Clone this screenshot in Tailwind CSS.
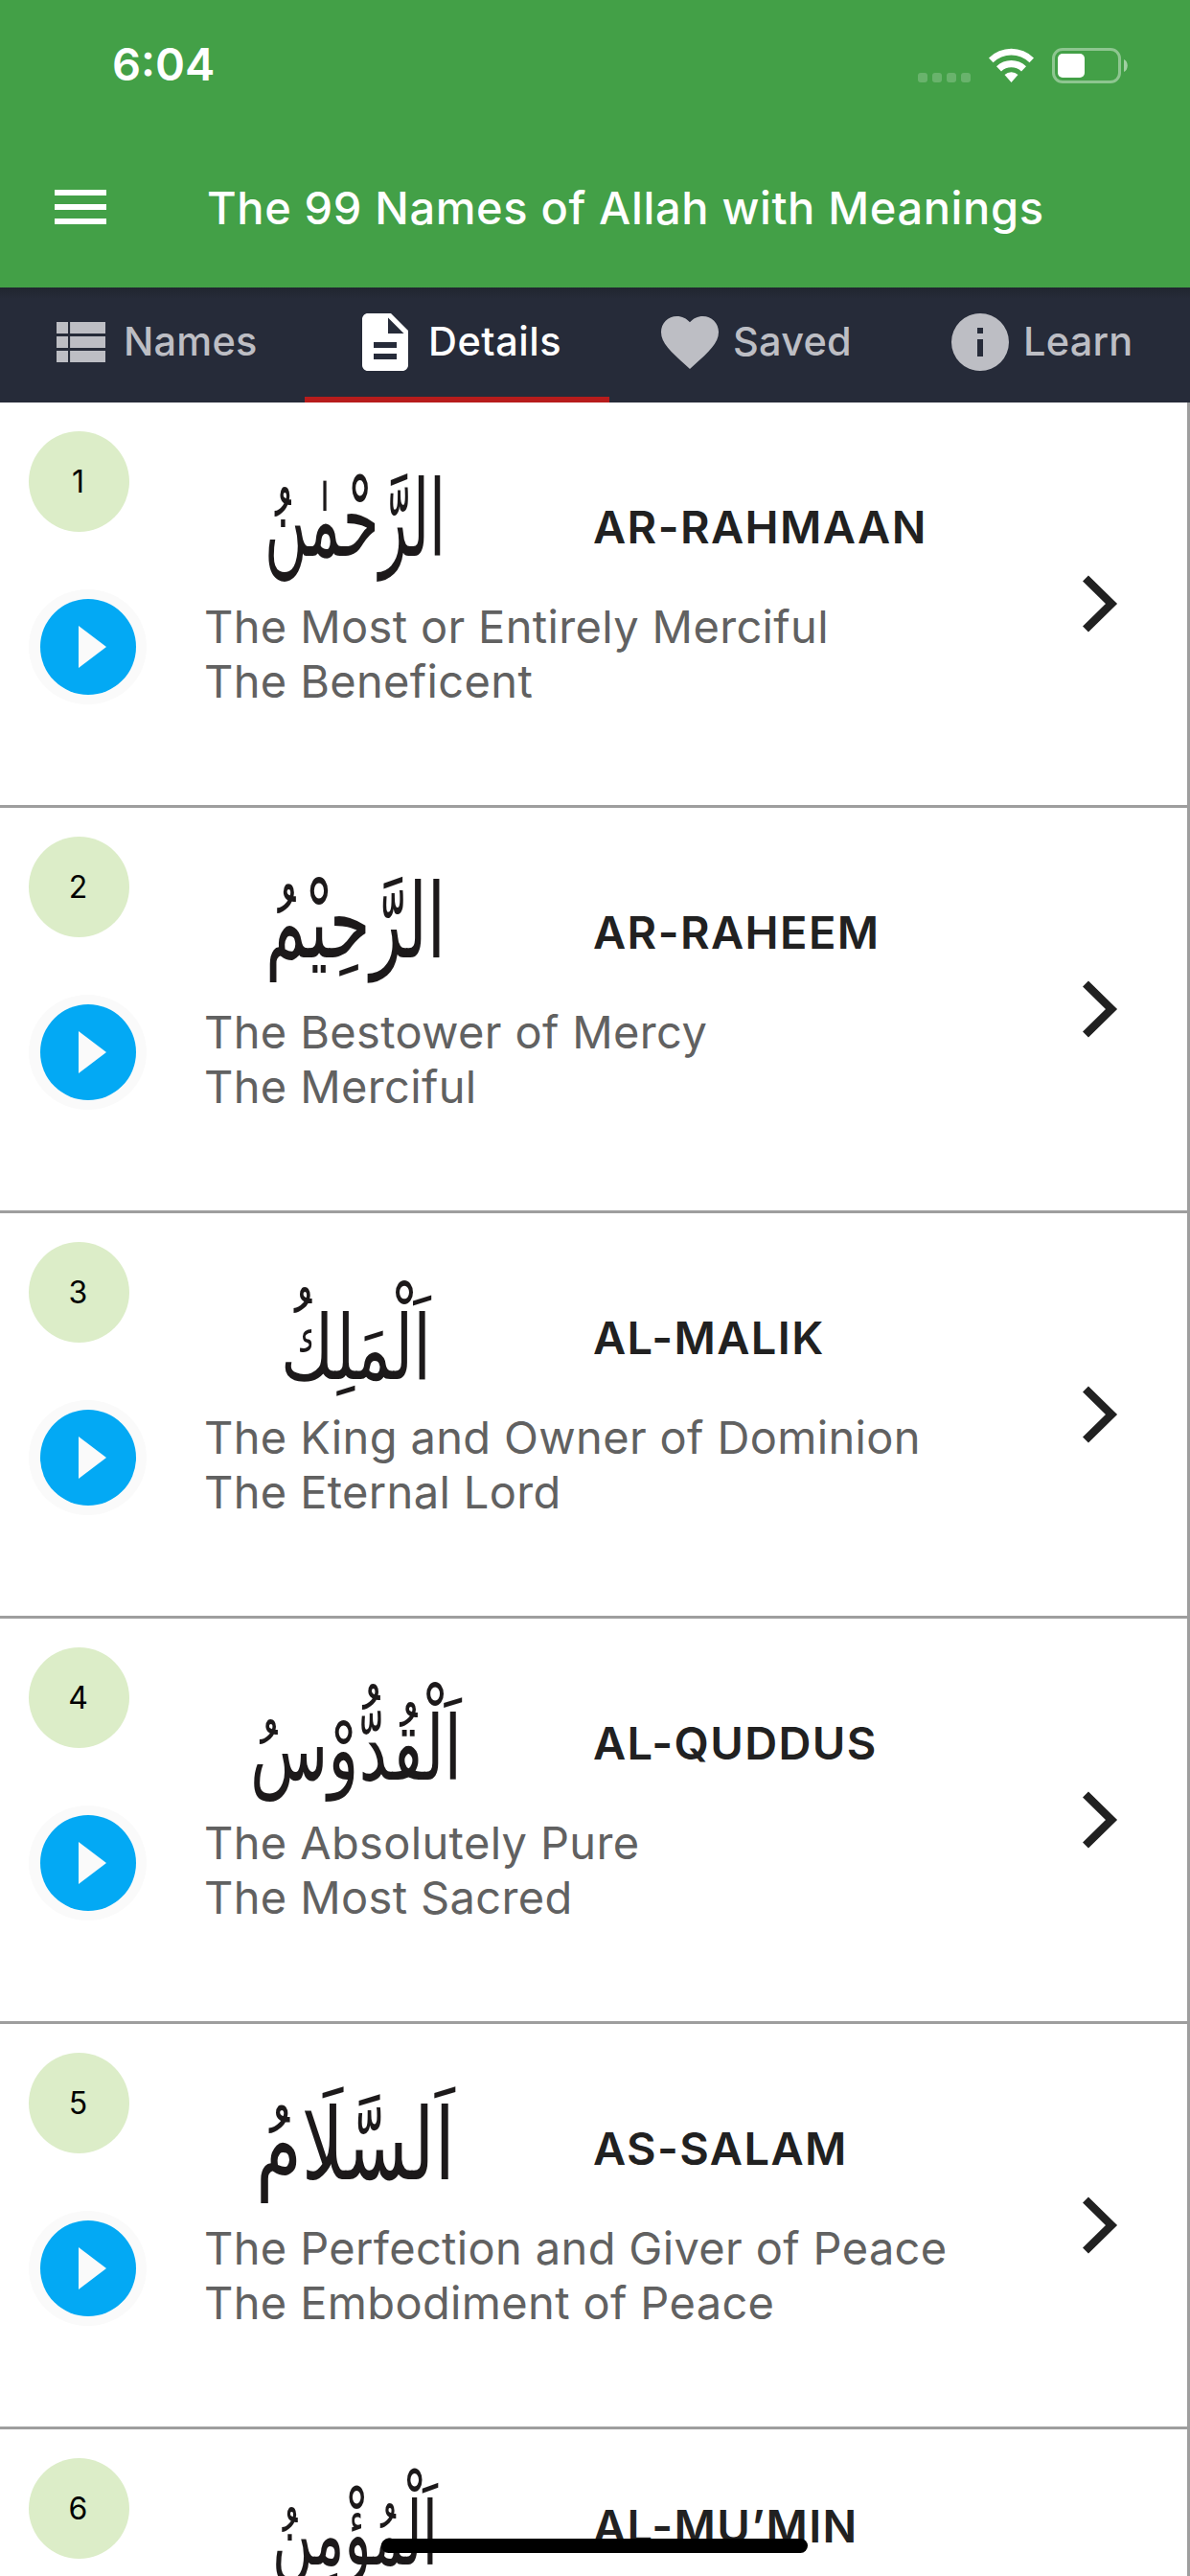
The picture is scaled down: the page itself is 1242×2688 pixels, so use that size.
<!DOCTYPE html>
<html lang="en">
<head>
<meta charset="utf-8">
<title>The 99 Names of Allah with Meanings</title>
<script src="https://cdn.jsdelivr.net/npm/@tailwindcss/browser@4"></script>
</head>
<body class="bg-white">
<div class="relative flex h-[2688px] w-[1242px] flex-col overflow-hidden bg-white font-['Inter',sans-serif] text-[#212121]">
  <header class="flex h-[300px] shrink-0 flex-col bg-[#43a047] text-white">
    <div class="flex h-[132px] items-center justify-between pt-1 pr-[65px] pl-[117px]">
      <span class="pb-[3px] text-[47px] leading-none font-semibold">6:04</span>
      <svg class="h-[40px] w-[220px]" viewBox="957 47 220 40" fill="#fff">
        <g opacity=".2"><rect x="958" y="75" width="10" height="10" rx="3"/><rect x="973" y="75" width="10" height="10" rx="3"/><rect x="988" y="75" width="10" height="10" rx="3"/><rect x="1003" y="75" width="10" height="10" rx="3"/></g>
        <path d="M1032 59.500a33.500 33.500 0 0 1 47 0l-4.500 4.700a27 27 0 0 0-38 0z"/>
        <path d="M1040 68.200a22.500 22.500 0 0 1 31 0l-5 5.200a15.500 15.500 0 0 0-21 0z"/>
        <path d="M1048.500 77a10.500 10.500 0 0 1 14 0l-7 8z"/>
        <rect x="1099.500" y="50.500" width="69" height="34" rx="9.500" fill="none" stroke="#fff" stroke-opacity=".4" stroke-width="3"/>
        <rect x="1104" y="55" width="28" height="25" rx="5"/>
        <path d="M1173 61c5 2 5 11 0 13z" opacity=".5"/>
      </svg>
    </div>
    <div class="flex h-[168px] items-center pl-[57px]">
      <svg class="h-[36px] w-[54px]" viewBox="0 0 54 36" fill="#fff"><path d="M0 0h54v6H0zM0 15h54v6H0zM0 30h54v6H0z"/></svg>
      <h1 class="ml-[105px] text-[47px] leading-none font-medium tracking-[0.63px] whitespace-nowrap">The 99 Names of Allah with Meanings</h1>
    </div>
  </header>
  <nav class="flex h-[120px] shrink-0 bg-[#262b39] bg-linear-to-b from-[#20252f] to-[#262b39] to-10% text-[41.500px] leading-none font-medium tracking-[0.2px] text-[#bdbec4]">
    <div class="flex w-[318px] items-center pb-[6px] pl-[47px]"><svg class="size-[72px]" viewBox="0 0 24 24" fill="currentColor"><path d="M4 14h4v-4H4zm0 5h4v-4H4zM4 9h4V5H4zm4.700 5H21v-4H8.700zm0 5H21v-4H8.700zm0-14v4H21V5z"/></svg><span class="ml-[10px]">Names</span></div>
    <div class="flex w-[318px] items-center border-b-6 border-[#b71c1c] pl-[48px] text-white"><svg class="size-[72px]" viewBox="0 0 24 24" fill="currentColor"><path d="M14 2H6c-1.100 0-2 .9-2 2v16c0 1.100.9 2 2 2h12c1.100 0 2-.9 2-2V8zm2 16H8v-2h8zm0-4H8v-2h8zm-3-5V3.500L18.500 9z"/></svg><span class="ml-[9px] tracking-[0.5px]">Details</span></div>
    <div class="flex w-[303px] items-center pb-[6px] pl-[48px]"><svg class="size-[72px]" viewBox="0 0 24 24" fill="currentColor"><path d="m12 21.350-1.450-1.320C5.400 15.360 2 12.280 2 8.500 2 5.420 4.420 3 7.500 3c1.740 0 3.410.81 4.500 2.090C13.090 3.810 14.760 3 16.500 3 19.580 3 22 5.420 22 8.500c0 3.780-3.400 6.860-8.550 11.540z"/></svg><span class="ml-[9px]">Saved</span></div>
    <div class="flex w-[303px] items-center pb-[6px] pl-[48px]"><svg class="size-[72px]" viewBox="0 0 24 24" fill="currentColor"><path d="M12 2a10 10 0 1 0 0 20 10 10 0 0 0 0-20zm1 15h-2v-6h2zm0-8h-2V7h2z"/></svg><span class="ml-[9px]">Learn</span></div>
  </nav>
  <main id="list" class="border-r-3 border-[#9e9e9e]"></main>
  <div class="absolute top-[2649px] left-[398px] h-[15px] w-[445px] rounded-full bg-black"></div>
</div>
<script>
// ar: name, box: [left, baseline, width, font size] of the Arabic title inside its row
const names = [
  { ar: 'الرَّحْمٰنُ', t: 'AR-RAHMAAN', d: ['The Most or Entirely Merciful', 'The Beneficent'], box: [276, 160, 189, 110] },
  { ar: 'الرَّحِيْمُ', t: 'AR-RAHEEM', d: ['The Bestower of Mercy', 'The Merciful'], box: [277, 156, 188, 108] },
  { ar: 'اَلْمَلِكُ', t: 'AL-MALIK', d: ['The King and Owner of Dominion', 'The Eternal Lord'], box: [293, 173, 157, 94] },
  { ar: 'اَلْقُدُّوْسُ', t: 'AL-QUDDUS', d: ['The Absolutely Pure', 'The Most Sacred'], box: [261, 168, 221, 93] },
  { ar: 'اَلسَّلَامُ', t: 'AS-SALAM', d: ['The Perfection and Giver of Peace', 'The Embodiment of Peace'], box: [267, 162, 208, 104] },
  { ar: 'اَلْمُؤْمِنُ', t: 'AL-MU’MIN', d: [], box: [284, 170, 173, 92], high: true },
];
document.getElementById('list').innerHTML = names.map((n, i) => `
  <section class="flex h-[423px] border-b-3 border-[#9e9e9e]">
    <div class="flex w-[213px] shrink-0 flex-col pt-[30px] pl-[30px]">
      <div class="flex size-[105px] items-center justify-center rounded-full bg-[#dcedc8] pr-[2px] text-[32px] leading-none text-black">${i + 1}</div>
      <svg class="mt-[60px] h-[120px] w-[123px]" viewBox="0 0 123 120"><ellipse cx="61.500" cy="60" rx="61.500" ry="60" fill="#fafafa"/><circle cx="62" cy="60" r="50" fill="#03a9f4"/><path d="M52 38v44l29-22z" fill="#fafafa"/></svg>
    </div>
    <div class="flex w-[917px] shrink-0 flex-col">
      <div class="flex ${n.high ? 'h-[177px]' : 'h-[206px]'} items-end">
        <svg class="${n.high ? 'h-[177px]' : 'h-[206px]'} w-[406px] shrink-0 overflow-visible" viewBox="213 0 406 ${n.high ? 177 : 206}"><text direction="rtl" class="font-['DejaVu_Sans',sans-serif]" x="${n.box[0] + n.box[2]}" y="${n.box[1] - (n.high ? 29 : 0)}" font-size="${n.box[3]}" textLength="${n.box[2]}" lengthAdjust="spacingAndGlyphs" fill="#1c191a">${n.ar}</text></svg>
        <h2 class="pb-[48px] text-[47px] leading-[57px] font-semibold tracking-[1.4px] whitespace-nowrap">${n.t}</h2>
      </div>
      <div class="-mt-px text-[47px] leading-[57px] tracking-[0.35px] whitespace-nowrap text-[#616161]">${n.d.map(x => `<p>${x}</p>`).join('')}</div>
    </div>
    <svg class="mt-[180px] h-[60px] w-[37px]" viewBox="0 0 37 60" fill="none" stroke="#212121" stroke-width="8.500"><path d="M3 3.500 30 30 3 56.500"/></svg>
  </section>`).join('');
</script>
</body>
</html>
